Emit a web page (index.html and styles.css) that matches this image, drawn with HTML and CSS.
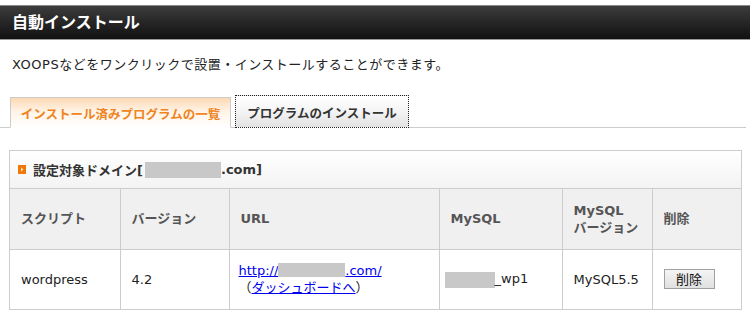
FILE: index.html
```html
<!DOCTYPE html>
<html lang="ja">
<head>
    <meta charset="UTF-8">
    <title>自動インストール</title>
    <link rel="stylesheet" href="styles.css">
</head>
<body>
    <h1 class="page-title">自動インストール</h1>
    <p class="lead">XOOPSなどをワンクリックで設置・インストールすることができます。</p>

    <div class="tabs">
        <a class="tab active" href="#">インストール済みプログラムの一覧</a>
        <a class="tab" href="#">プログラムのインストール</a>
    </div>

    <div class="domain-box">
        <div class="domain-head">
            <svg class="mark" width="8" height="9" viewBox="0 0 8 9">
                <rect x="0" y="0" width="8" height="9" fill="#f0780a"></rect>
                <path d="M3 2.5 L5.5 4.5 L3 6.5 Z" fill="#fde0b0"></path>
            </svg>
            設定対象ドメイン[<span class="mask mask-domain"></span>.com]
        </div>
        <table class="list">
            <colgroup>
                <col style="width:110px">
                <col style="width:109px">
                <col style="width:210px">
                <col style="width:123px">
                <col style="width:90px">
                <col>
            </colgroup>
            <thead>
                <tr>
                    <th>スクリプト</th>
                    <th>バージョン</th>
                    <th>URL</th>
                    <th>MySQL</th>
                    <th>MySQL<br>バージョン</th>
                    <th>削除</th>
                </tr>
            </thead>
            <tbody>
                <tr>
                    <td>wordpress</td>
                    <td>4.2</td>
                    <td class="url">
                        <a href="#">http://<span class="mask mask-url"></span>.com/</a><br>
                        （<a href="#">ダッシュボードへ</a>）
                    </td>
                    <td><span class="mask mask-db"></span>_wp1</td>
                    <td>MySQL5.5</td>
                    <td><button class="btn">削除</button></td>
                </tr>
            </tbody>
        </table>
    </div>
</body>
</html>
```

FILE: styles.css
```css
* {
    box-sizing: border-box;
}

body {
    margin: 0;
    padding-top: 5px;
    background: #fff;
    color: #222;
    font-family: "DejaVu Sans", "Noto Sans CJK JP", sans-serif;
    font-size: 13px;
}

.page-title {
    margin: 0;
    height: 35px;
    padding-left: 12px;
    line-height: 33px;
    font-size: 16px;
    font-weight: bold;
    color: #fff;
    background: linear-gradient(#3c3c3c 0%, #262626 50%, #111 100%);
    border-top: 1px solid #888;
    border-bottom: 1px solid #999;
}

.lead {
    margin: 16px 0 0 12px;
    line-height: 18px;
    letter-spacing: 0.5px;
}

.tabs {
    display: flex;
    align-items: flex-end;
    margin: 22px 4px 0 0;
    padding-left: 10px;
    border-bottom: 1px solid #ccc;
    height: 32px;
}

.tab {
    display: flex;
    align-items: center;
    justify-content: center;
    padding-top: 1px;
    font-size: 12.5px;
    font-weight: bold;
    text-decoration: none;
}

.tab.active {
    width: 221px;
    height: 31px;
    margin-bottom: -1px;
    color: #f0841e;
    border: 1px solid #ccc;
    border-bottom: 1px solid #fff;
    background: linear-gradient(#fdd9b3 0%, #fff3e6 45%, #fff 100%);
}

.tab:not(.active) {
    width: 174px;
    height: 33px;
    margin-left: 4px;
    margin-bottom: -1px;
    color: #333;
    border: 1px dotted #222;
    background: linear-gradient(#fff 0%, #f4f4f4 50%, #e2e2e2 100%);
}

.domain-box {
    margin: 22px 8px 0 9px;
    border: 1px solid #ccc;
    border-bottom: none;
}

.domain-head {
    display: flex;
    align-items: center;
    height: 38px;
    padding-left: 8px;
    font-weight: bold;
    color: #333;
    background: linear-gradient(#fff 0%, #f3f3f3 100%);
    border-bottom: 1px solid #ccc;
}

.mark {
    margin-right: 7px;
}

.mask {
    display: inline-block;
    background: #c8c8c8;
    height: 16px;
    vertical-align: middle;
}

.mask-domain {
    width: 76px;
    margin-left: 2px;
}

.list {
    width: 100%;
    border-collapse: collapse;
    table-layout: fixed;
}

.list th,
.list td {
    border: 1px solid #ccc;
    padding: 0 0 0 11px;
    height: 60px;
    text-align: left;
    vertical-align: middle;
}

.list tr > :first-child {
    border-left: none;
}

.list tr > :last-child {
    border-right: none;
}

.list thead tr:first-child th {
    border-top: none;
}

.list th {
    background: #f0f0f0;
    color: #555;
    font-weight: bold;
    line-height: 17px;
}

.list td {
    color: #222;
    line-height: 17px;
}

.list td.url {
    padding-left: 9px;
}

.list a {
    color: #0000ee;
}

.mask-url {
    width: 67px;
    height: 14px;
    vertical-align: -2px;
}

.mask-db {
    width: 50px;
    height: 16px;
    margin-left: -6px;
}

.btn {
    width: 51px;
    height: 20px;
    padding: 0;
    font-family: "Noto Sans CJK JP", sans-serif;
    font-size: 13px;
    line-height: 16px;
    color: #111;
    border: 1px solid #a0a0a0;
    border-radius: 0;
    background: linear-gradient(#f4f4f4, #e0e0e0);
}
```
